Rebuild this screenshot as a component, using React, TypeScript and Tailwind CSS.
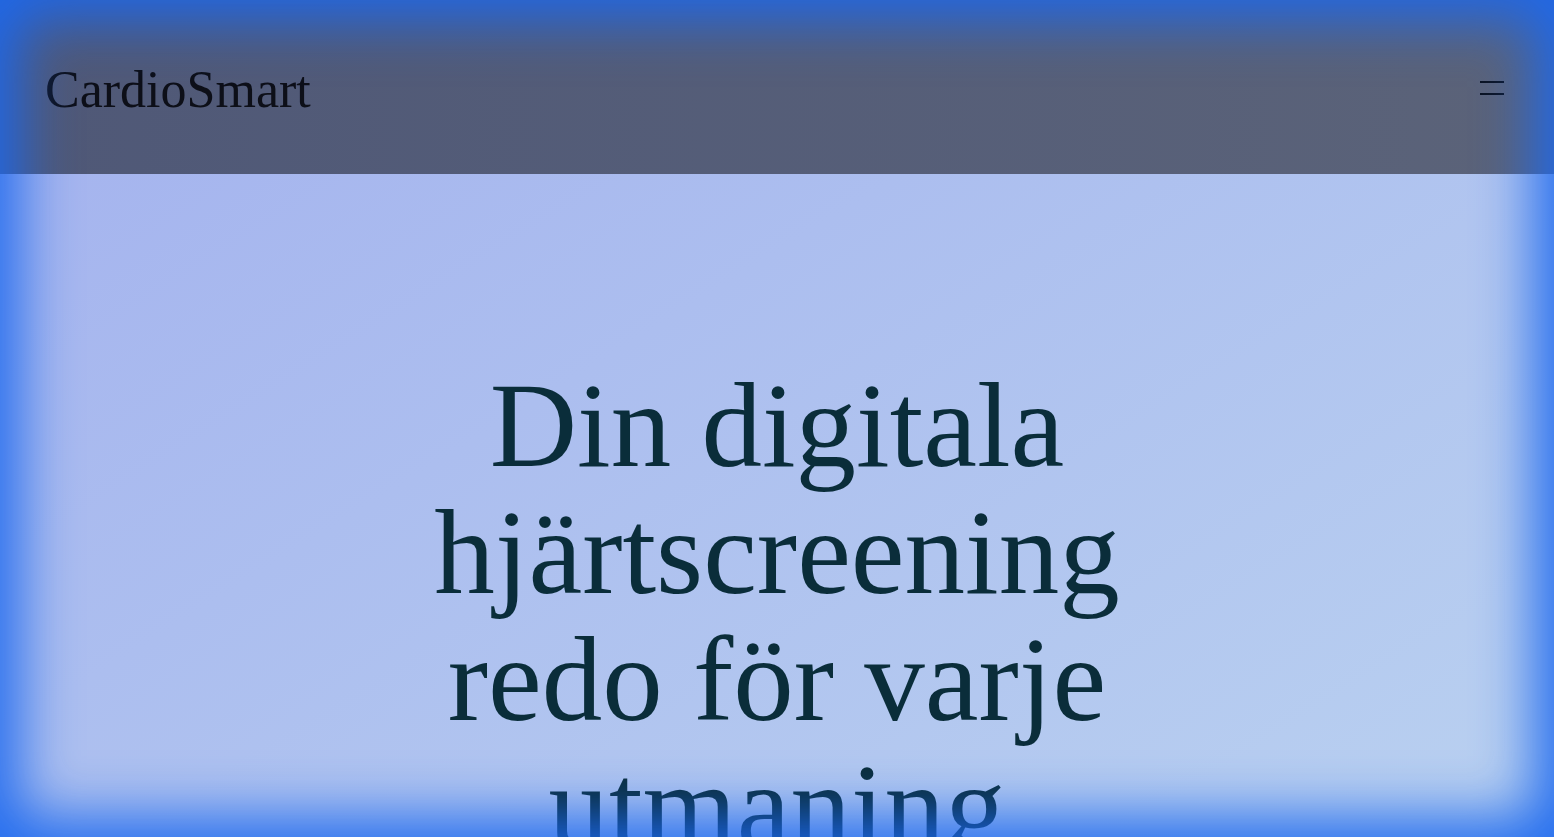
import React from 'react';

const App: React.FC = () => {
  return (
    <div className="relative min-h-screen bg-gradient-to-br from-[#a3b1ee] to-[#bbd3f0] font-['Liberation_Serif',serif]">
      <header className="flex h-[174px] items-center justify-between bg-gradient-to-r from-[#4f5877] to-[#5b6379] px-[45px]">
        <a href="#" className="text-[52px] leading-none text-[#0d0f18] pt-[6px]">CardioSmart</a>
        <button className="flex w-[24px] flex-col gap-[10px] mr-[5px] mt-[1px]" aria-label="Meny">
          <span className="block h-[2px] w-full bg-[#0b1220]" />
          <span className="block h-[2px] w-full bg-[#0b1220]" />
        </button>
      </header>

      <main className="flex justify-center px-8 pt-[188px] pb-24">
        <h1 className="max-w-[800px] text-center text-[121px] leading-[127px] text-[#0a2d3a]">
          Din digitala hjärtscreening redo för varje utmaning
        </h1>
      </main>

      {/* blue glow frame over the page */}
      <div className="pointer-events-none fixed inset-0 shadow-[inset_0_0_55px_20px_rgba(28,104,238,0.95)]" />
    </div>
  );
};

export default App;
